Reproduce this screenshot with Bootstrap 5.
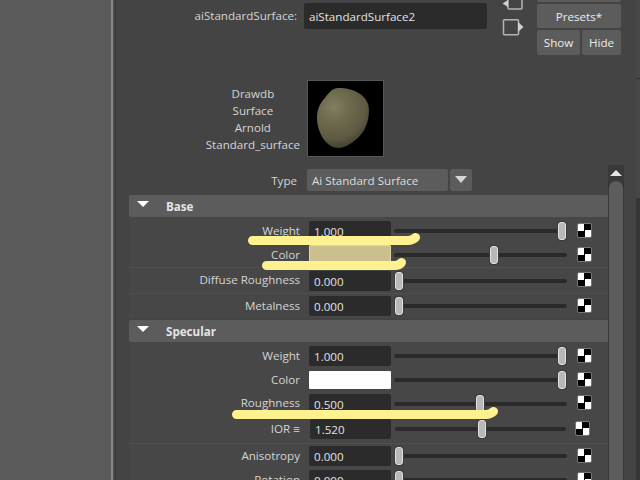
<!DOCTYPE html>
<html lang="en">
<head>
<meta charset="utf-8">
<title>Attribute Editor</title>
<link href="https://cdn.jsdelivr.net/npm/bootstrap@5.3.0/dist/css/bootstrap.min.css" rel="stylesheet">
<style>
html,body{width:640px;height:480px;overflow:hidden;}
body{background:#444;color:#d4d4d4;font-family:"Open Sans","Noto Sans",sans-serif;font-size:11.6px;line-height:17px;}
.shell{width:640px;height:480px;position:relative;overflow:hidden;}
.side-pane{width:111px;background:#5a5a5a;}
.side-rule{width:5px;background:linear-gradient(90deg,#888 0 2px,#4c4c4c 2px 4px,#363636 4px);}
.main-pane{width:520px;background:#444;}
.edge-strip{width:4px;background:linear-gradient(180deg,#474747 0 78px,#333 78px 79px,#474747 79px 198px,#363636 198px);}
.top-area{height:165px;}
.head-row{height:55px;}
.name-label{width:181px;margin-top:7px;text-align:right;}
.name-field{width:183px;height:26px;margin:3px 0 0 7px;background:#2b2b2b;border:0;border-radius:2px;color:#e2e2e2;font-size:11.6px;padding:0 5px;}
.side-icons{margin-left:15px;width:22px;}
.btn-stack{width:84px;margin:-22px 0 0 13px;}
.mbtn{background:#5c5c5c;color:#ececec;border:0;border-radius:2px;font-size:11.6px;line-height:17px;padding:0;}
.mbtn-h24{height:24px;}
.mbtn-h25{height:25px;}
.gap-2px{gap:2px;}
.preview-row{margin-top:25px;height:77px;}
.preview-labels{width:184px;padding-top:5px;}
.preview-box{width:77px;height:77px;margin-left:7px;background:#000;border:1px solid #565656;}
.lower-area{height:315px;}
.props-col{width:493px;padding:4px 0 0 13px;}
.type-row{height:22px;margin-bottom:4px;}
.type-label{width:168px;text-align:right;padding-top:3px;}
.type-select{width:141px;height:22px;margin-left:10px;background:#5c5c5c;border-radius:2px;padding:3px 5px;color:#dcdcdc;}
.type-arrow{width:22px;height:22px;margin-left:2px;background:#5c5c5c;border-radius:2px;}
.sect-head{width:480px;height:22px;background:#5c5c5c;border-radius:2px;font-weight:700;color:#e4e4e4;}
.sect-tri{width:0;height:0;margin:0 17px 5px 8px;border-left:6px solid transparent;border-right:6px solid transparent;border-top:6px solid #fff;}
.sect-body{width:480px;background:#474747;margin-bottom:2px;padding-top:2px;}
.prop{width:480px;}
.h23{height:23px;}.h24{height:24px;}.h25{height:25px;}.h26{height:26px;}.h29{height:29px;}
.sep{border-bottom:1px solid #505050;}
.prop-label{width:171px;text-align:right;padding-bottom:2px;}
.num-box{width:82px;height:20px;margin-left:9px;background:#2b2b2b;border-radius:2px;color:#e2e2e2;padding:2px 5px 0;}
.shift-box{margin-left:10px;width:81px;}
.col-box{width:82px;margin-left:9px;border-radius:1px;}
.col-tan{height:20px;background:#cbbf8d;border:1px solid #dfd6a8;}
.col-white{height:18px;background:#fff;}
.slide{width:173px;height:18px;margin-left:3px;position:relative;}
.slide::before{content:"";position:absolute;left:0;right:0;top:7px;height:4px;border-radius:2px;background:#2a2a2a;}
.shift-slide{margin-left:4px;width:171px;}
.knob{position:absolute;top:0;width:8px;height:18px;border-radius:3px;background:#b8b8b8;border:1px solid #e2e2e2;box-shadow:0 0 0 1px #3a3a3a;}
.map-btn{width:15px;height:15px;margin:0 0 2px 10px;border-radius:2px;border:1px solid #777;background:conic-gradient(#000 0 25%,#fff 25% 50%,#000 50% 75%,#fff 75%);}
.map-shift{margin-left:9px;}
.scroll-col{width:16px;margin-left:-1px;}
.scroll-up{height:16px;background:#393939;}
.scroll-tri{width:0;height:0;border-left:6px solid transparent;border-right:6px solid transparent;border-bottom:6px solid #e6e6e6;}
.scroll-rail{background:#393939;padding:0 1px;}
.scroll-thumb{background:#5d5d5d;border-radius:7px 7px 0 0;}
.marker-layer{position:absolute;left:0;top:0;pointer-events:none;}
</style>
</head>
<body>
<div class="shell d-flex">
  <div class="side-pane flex-shrink-0"></div>
  <div class="side-rule flex-shrink-0"></div>
  <div class="main-pane flex-shrink-0 d-flex flex-column">
    <div class="top-area flex-shrink-0">
      <div class="head-row d-flex align-items-start">
        <div class="name-label">aiStandardSurface:</div>
        <input class="name-field" type="text" value="aiStandardSurface2" aria-label="aiStandardSurface">
        <div class="side-icons">
          <svg width="22" height="37" viewBox="502 0 22 37" fill="none" aria-hidden="true">
            <path d="M508 -6V8Q508 9 509 9H521Q522 9 522 8V-6" stroke="#b4b4b4" stroke-width="1.5"/>
            <path d="M502.500 3.500L508 0V7Z" fill="#d0d0d0"/>
            <rect x="503.500" y="19.700" width="15" height="15" rx="1" stroke="#b4b4b4" stroke-width="1.500"/>
            <path d="M518 22L523.500 27L518 32Z" fill="#d0d0d0"/>
          </svg>
        </div>
        <div class="btn-stack d-flex flex-column gap-2px">
          <button class="btn mbtn mbtn-h24" type="button">&nbsp;</button>
          <button class="btn mbtn mbtn-h24" type="button">Presets*</button>
          <div class="d-flex gap-2px">
            <button class="btn mbtn mbtn-h25 flex-fill" type="button">Show</button>
            <button class="btn mbtn mbtn-h25 flex-fill" type="button">Hide</button>
          </div>
        </div>
      </div>
      <div class="preview-row d-flex">
        <div class="preview-labels d-flex justify-content-end">
          <div class="text-center">Drawdb<br>Surface<br>Arnold<br>Standard_surface</div>
        </div>
        <div class="preview-box">
          <svg width="75" height="75" viewBox="1 1 75 75" aria-hidden="true">
            <defs>
              <radialGradient id="eggShade" gradientUnits="userSpaceOnUse" cx="27" cy="27" r="46">
                <stop offset="0" stop-color="#827e62"/>
                <stop offset=".3" stop-color="#6f6c4f"/>
                <stop offset=".7" stop-color="#5d5a41"/>
                <stop offset="1" stop-color="#35332a"/>
              </radialGradient>
            </defs>
            <path d="M31 8C48 8 62 16 62 30C62 40 59 47 56 52C50 60 40 68 31 68C20 68 10 53 10 38C10 28 14 22 18 18C22 12 26 8 31 8Z" fill="url(#eggShade)"/>
          </svg>
        </div>
      </div>
    </div>
    <div class="lower-area d-flex flex-shrink-0">
      <div class="props-col flex-shrink-0">
        <div class="type-row d-flex">
          <div class="type-label">Type</div>
          <div class="type-select">Ai Standard Surface</div>
          <div class="type-arrow d-flex align-items-center justify-content-center">
            <svg width="12" height="8" viewBox="0 0 12 8" aria-hidden="true"><path d="M0 0H12L6 7Z" fill="#d6d6d6"/></svg>
          </div>
        </div>

        <div class="sect-head d-flex align-items-center"><span class="sect-tri"></span>Base</div>
        <div class="sect-body">
          <div class="prop h24 d-flex align-items-center">
            <div class="prop-label">Weight</div><div class="num-box">1.000</div>
            <div class="slide"><span class="knob" style="left:164px"></span></div><div class="map-btn"></div>
          </div>
          <div class="prop h25 sep d-flex align-items-center">
            <div class="prop-label">Color</div><div class="col-box col-tan"></div>
            <div class="slide"><span class="knob" style="left:96px"></span></div><div class="map-btn"></div>
          </div>
          <div class="prop h26 sep d-flex align-items-center">
            <div class="prop-label">Diffuse Roughness</div><div class="num-box">0.000</div>
            <div class="slide"><span class="knob" style="left:1px"></span></div><div class="map-btn"></div>
          </div>
          <div class="prop h24 d-flex align-items-center">
            <div class="prop-label">Metalness</div><div class="num-box">0.000</div>
            <div class="slide"><span class="knob" style="left:1px"></span></div><div class="map-btn"></div>
          </div>
        </div>

        <div class="sect-head d-flex align-items-center"><span class="sect-tri"></span>Specular</div>
        <div class="sect-body">
          <div class="prop h24 d-flex align-items-center">
            <div class="prop-label">Weight</div><div class="num-box">1.000</div>
            <div class="slide"><span class="knob" style="left:164px"></span></div><div class="map-btn"></div>
          </div>
          <div class="prop h24 d-flex align-items-center">
            <div class="prop-label">Color</div><div class="col-box col-white"></div>
            <div class="slide"><span class="knob" style="left:164px"></span></div><div class="map-btn"></div>
          </div>
          <div class="prop h23 d-flex align-items-center">
            <div class="prop-label">Roughness</div><div class="num-box">0.500</div>
            <div class="slide"><span class="knob" style="left:82px"></span></div><div class="map-btn"></div>
          </div>
          <div class="prop h29 sep d-flex align-items-center">
            <div class="prop-label">IOR ≡</div><div class="num-box shift-box">1.520</div>
            <div class="slide shift-slide"><span class="knob" style="left:83px"></span></div><div class="map-btn map-shift"></div>
          </div>
          <div class="prop h24 d-flex align-items-center">
            <div class="prop-label">Anisotropy</div><div class="num-box">0.000</div>
            <div class="slide"><span class="knob" style="left:1px"></span></div><div class="map-btn"></div>
          </div>
          <div class="prop h24 d-flex align-items-center">
            <div class="prop-label">Rotation</div><div class="num-box">0.000</div>
            <div class="slide"><span class="knob" style="left:1px"></span></div><div class="map-btn"></div>
          </div>
        </div>
      </div>
      <div class="scroll-col d-flex flex-column flex-shrink-0">
        <div class="scroll-up d-flex align-items-center justify-content-center"><span class="scroll-tri"></span></div>
        <div class="scroll-rail flex-grow-1 d-flex flex-column"><div class="scroll-thumb flex-grow-1"></div></div>
      </div>
    </div>
  </div>
  <div class="edge-strip flex-shrink-0"></div>
  <svg class="marker-layer" width="640" height="480" fill="none" stroke="#fdf190" stroke-width="9" stroke-linecap="round" stroke-linejoin="round" aria-hidden="true">
    <path d="M252.500 240.500H408Q412 240.500 415.500 237.500"/>
    <path d="M266.500 265.500H395Q399 265.500 401.500 262.500"/>
    <path d="M236.500 414.500H486Q490 414.500 493.500 411.500"/>
  </svg>
</div>
</body>
</html>
